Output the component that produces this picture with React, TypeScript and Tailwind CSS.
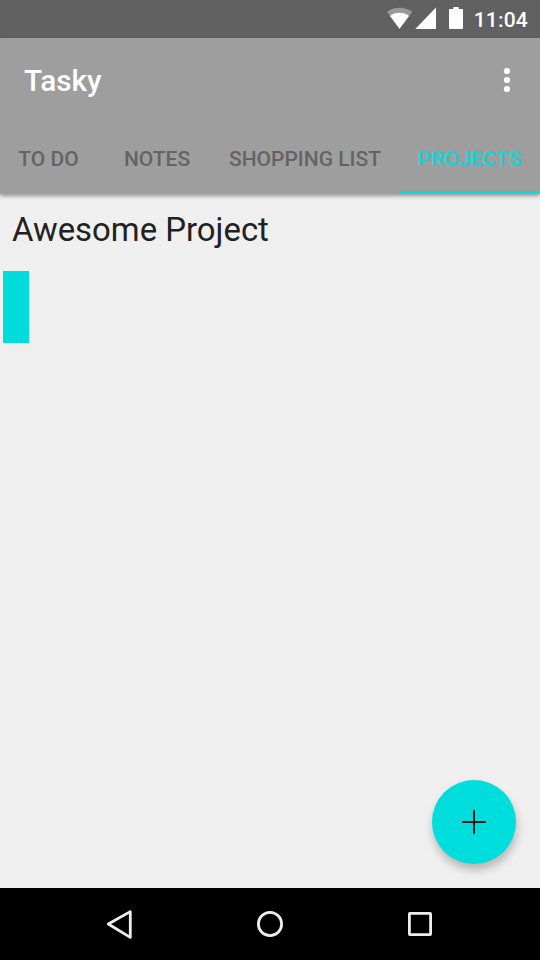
import { useState } from "react";

interface Tab {
  label: string;
  width: string;
}

const tabs: Tab[] = [
  { label: "TO DO", width: "w-[109px]" },
  { label: "NOTES", width: "w-[108px]" },
  { label: "SHOPPING LIST", width: "w-[188px]" },
  { label: "PROJECTS", width: "w-[141px] tracking-[0.1px]" }
];

function StatusBar() {
  return (
    <div className="h-[38px] shrink-0 bg-[#616161] flex items-center justify-end pr-3 text-white">
      <div className="flex pb-[2px]">
        <svg className="w-[26px] h-[22px] mr-[2px]" viewBox="0 0 26 22" fill="currentColor">
          <path opacity="0.35" d="M0 4.8C3.6 1.9 8 0.8 12.5 0.8s9 1.1 12.8 4L12.5 21.8z" />
          <path d="M3 9C5.6 6.7 8.8 5.7 12.5 5.7s6.9 1 9.5 3.3L12.5 21.8z" />
        </svg>
        <svg className="w-[22px] h-[22px] mr-3" viewBox="0 0 22 22" fill="currentColor">
          <path d="M0.3 22H21V0.6z" />
        </svg>
        <svg className="w-[14px] h-[22px] mr-[11px]" viewBox="0 0 14 22" fill="currentColor">
          <path d="M4.3 0h5.4v2H13a1 1 0 0 1 1 1v18a1 1 0 0 1-1 1H1a1 1 0 0 1-1-1V3a1 1 0 0 1 1-1h3.3z" />
        </svg>
      </div>
      <span className="pt-[2px] text-[21px] leading-[24px] font-medium tracking-[0.2px]">11:04</span>
    </div>
  );
}

function NavBar() {
  return (
    <nav className="h-[72px] shrink-0 bg-black flex items-center justify-center gap-[108px] text-[#eeeeee]">
      <button aria-label="Back">
        <svg className="w-[42px] h-[42px]" viewBox="0 0 42 42" fill="none" stroke="currentColor" strokeWidth="2.8" strokeLinejoin="round">
          <path d="M31.3 8.6v25.8L9.3 21z" />
        </svg>
      </button>
      <button aria-label="Home">
        <svg className="w-[42px] h-[42px]" viewBox="0 0 42 42" fill="none" stroke="currentColor" strokeWidth="2.8">
          <circle cx="21" cy="21" r="11.6" />
        </svg>
      </button>
      <button aria-label="Recents">
        <svg className="w-[42px] h-[42px]" viewBox="0 0 42 42" fill="none" stroke="currentColor" strokeWidth="2.8" strokeLinejoin="round">
          <rect x="10.4" y="10.4" width="21.2" height="21.2" rx="0.5" />
        </svg>
      </button>
    </nav>
  );
}

export default function App() {
  const [active, setActive] = useState("PROJECTS");

  return (
    <div className="relative w-[540px] h-[960px] flex flex-col overflow-hidden bg-[#efefef] font-['Roboto',sans-serif]">
      <StatusBar />

      <header className="relative shrink-0 bg-[#9e9e9e] shadow-[0_2px_4px_rgba(0,0,0,0.38)]">
        <div className="h-[84px] flex items-center justify-between pl-6 pr-[27px]">
          <h1 className="pt-[2px] text-[29.7px] leading-[36px] font-medium text-white">Tasky</h1>
          <button aria-label="More options" className="text-white">
            <svg className="w-[12px] h-[26px]" viewBox="0 0 12 26" fill="currentColor">
              <circle cx="6" cy="4" r="3.1" />
              <circle cx="6" cy="13" r="3.1" />
              <circle cx="6" cy="22" r="3.1" />
            </svg>
          </button>
        </div>
        {/* the strip is scrolled to its end, so the first tab runs off the left edge */}
        <div className="h-[72px] flex justify-end overflow-hidden">
          {tabs.map(t => (
            <button
              key={t.label}
              onClick={() => setActive(t.label)}
              className={`${t.width} shrink-0 h-full flex flex-col text-[21px] leading-[24px] font-medium whitespace-nowrap ${active === t.label ? "text-[#10d6d6]" : "text-[#646464]"}`}
            >
              <span className="flex-1 w-full flex items-center justify-center pt-[5px]">{t.label}</span>
              <span className={`h-[3px] w-full ${active === t.label ? "bg-[#0adada]" : "bg-transparent"}`} />
            </button>
          ))}
        </div>
      </header>

      <main className="flex-1">
        <h2 className="pt-4 pl-3 text-[32.9px] leading-[40px] text-[#212121]">Awesome Project</h2>
        <div className="mt-[21px] ml-[3px] w-[26px] h-[72px] bg-[#00dcdc]" />
      </main>

      <button aria-label="Add project" className="absolute right-6 bottom-24 w-[84px] h-[84px] rounded-full bg-[#00dddd] flex items-center justify-center shadow-[1px_6px_9px_rgba(0,0,0,0.24)]">
        <svg className="w-6 h-6 text-[#212121]" viewBox="0 0 24 24" fill="none" stroke="currentColor" strokeWidth="2">
          <path d="M12 0v24M0 12h24" />
        </svg>
      </button>

      <NavBar />
    </div>
  );
}
